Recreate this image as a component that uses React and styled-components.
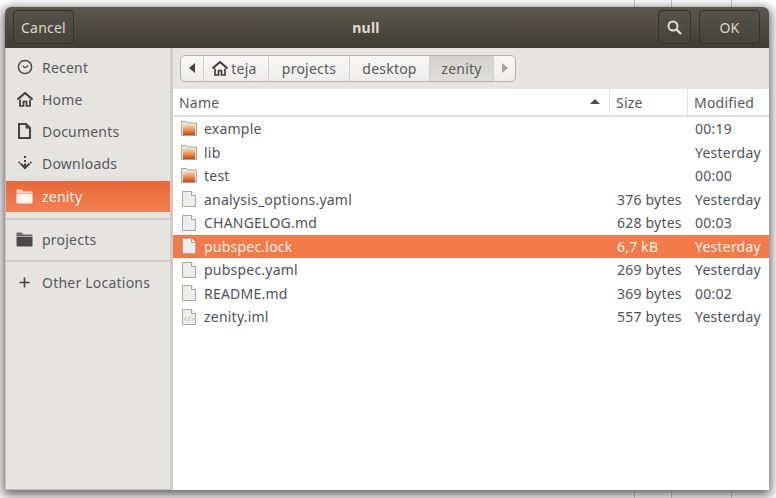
import React from 'react'
import styled, { createGlobalStyle } from 'styled-components'

const GlobalStyle = createGlobalStyle`
    html, body {
        margin: 0;
        padding: 0;
        background: #ffffff;
    }
    * {
        box-sizing: border-box;
    }
`

const Stage = styled.div`
    width: 776px;
    height: 498px;
    overflow: hidden;
    padding: 7px 7px 8px 5px;
    font-family: "Noto Sans", "Open Sans", sans-serif;
    font-size: 14px;
    letter-spacing: 0.22px;
    color: #4a4a48;
    background:
        linear-gradient(#cfcfcf, #cfcfcf) 634px 0 / 1px 100% no-repeat,
        linear-gradient(#cfcfcf, #cfcfcf) 671px 0 / 1px 100% no-repeat,
        linear-gradient(#cfcfcf, #cfcfcf) 731px 0 / 1px 100% no-repeat,
        #ffffff;
`

const Window = styled.div`
    width: 764px;
    height: 483px;
    display: flex;
    flex-direction: column;
    border-radius: 6px 6px 0 0;
    box-shadow: 0 3px 11px 2px rgba(0, 0, 0, 0.62);
    background: #ffffff;
`

const TitleBar = styled.div`
    height: 41px;
    flex: none;
    display: flex;
    align-items: center;
    padding: 0 9px 1px 8px;
    gap: 8px;
    border-radius: 6px 6px 0 0;
    background: linear-gradient(#5b574d, #3f3d35);
`

const HeaderButton = styled.div`
    width: ${(p) => p.$width}px;
    height: 34px;
    display: flex;
    align-items: center;
    justify-content: center;
    border: 1px solid #34322b;
    border-radius: 4px;
    color: #dcd8cf;
    background: linear-gradient(#55524a, #45433b);
`

const Title = styled.div`
    flex: 1;
    text-align: center;
    font-weight: 700;
    color: #e0dcd3;
`

const Body = styled.div`
    flex: 1;
    min-height: 0;
    display: flex;
`

const Sidebar = styled.div`
    width: 168px;
    flex: none;
    padding-top: 3px;
    background: #e6e4e1;
    border-left: 1px solid #c4c1bb;
    border-bottom: 1px solid #c4c1bb;
    border-right: 3px solid #cfcbc6;
`

const Place = styled.div`
    height: ${(p) => (p.$active ? 31 : 32)}px;
    margin-top: ${(p) => (p.$active ? 2 : 0)}px;
    display: flex;
    align-items: center;
    padding-left: 10px;
    gap: 9px;
    color: ${(p) => (p.$active ? '#fff6f0' : '#55595c')};
    background: ${(p) => (p.$active ? 'linear-gradient(#e8693a, #f48052)' : 'transparent')};
`

const PlaceIcon = styled.div`
    width: 17px;
    height: 17px;
    flex: none;
    display: flex;
    align-items: center;
    justify-content: center;
`

const Separator = styled.div`
    height: 2px;
    margin: ${(p) => p.$margin};
    background: #cfcdc9;
`

const Main = styled.div`
    flex: 1;
    min-width: 0;
    display: flex;
    flex-direction: column;
`

const PathArea = styled.div`
    height: 41px;
    flex: none;
    padding: 7px 0 0 7px;
    background: #e6e4e1;
`

const PathBar = styled.div`
    width: 336px;
    height: 27px;
    display: flex;
    border: 1px solid #b5b2ac;
    border-radius: 5px;
    overflow: hidden;
    background: linear-gradient(#f8f7f6, #eeedeb);
`

const Crumb = styled.div`
    width: ${(p) => p.$width}px;
    flex: none;
    display: flex;
    align-items: center;
    justify-content: center;
    gap: 3px;
    padding: 0 ${(p) => p.$shift || 0}px 1px 0;
    border-right: ${(p) => (p.$last ? 'none' : '1px solid #d3d0cb')};
    color: ${(p) => (p.$muted ? '#a09e9a' : '#57595a')};
    background: ${(p) => (p.$current ? 'linear-gradient(#d3d1cd, #e0dedb)' : 'transparent')};
`

const HeadRow = styled.div`
    height: 28px;
    flex: none;
    display: grid;
    grid-template-columns: 437px 78px 81px;
    border-bottom: 2px solid #e3e1de;
`

const HeadCell = styled.div`
    display: flex;
    align-items: center;
    justify-content: space-between;
    padding: 0 9px 0 6px;
    border-right: ${(p) => (p.$last ? 'none' : '1px solid #e3e1de')};
    color: #55595c;
`

const SortArrow = styled.div`
    width: 0;
    height: 0;
    margin-bottom: 1px;
    border-left: 5px solid transparent;
    border-right: 5px solid transparent;
    border-bottom: 5px solid #4c4c4a;
`

const Rows = styled.div`
    flex: 1;
    background: #ffffff;
`

const Row = styled.div`
    height: 23.5px;
    display: grid;
    grid-template-columns: 437px 78px 81px;
    align-items: center;
    color: ${(p) => (p.$selected ? '#fff4ee' : '#4f5358')};
    background: ${(p) => (p.$selected ? '#f27a49' : 'transparent')};
`

const NameCell = styled.div`
    display: flex;
    align-items: center;
    padding-left: 8px;
    gap: 7px;
`

const FileIconBox = styled.div`
    width: 16px;
    height: 16px;
    flex: none;
    display: flex;
    align-items: center;
    justify-content: center;
`

const SizeCell = styled.div`
    padding-left: 7px;
    white-space: nowrap;
`

const DateCell = styled.div`
    padding-left: 7px;
`

function FolderIcon({ tone }) {
    if (tone === 'light' || tone === 'dark') {
        const fill = tone === 'light' ? '#fdf6f1' : '#4a4a4a'
        return (
            <svg width="17" height="15" viewBox="0 0 17 15">
                <path d="M0.5 1.5 a1 1 0 0 1 1 -1 h4 l2 2 h8 a1 1 0 0 1 1 1 v1 h-16z" fill={fill} opacity="0.8" />
                <path d="M0.5 5 h16 v8.5 a1 1 0 0 1 -1 1 h-14 a1 1 0 0 1 -1 -1z" fill={fill} />
            </svg>
        )
    }
    return (
        <svg width="16" height="15" viewBox="0 0 16 15">
            <defs>
                <linearGradient id="folderBody" x1="0" y1="0" x2="0" y2="1">
                    <stop offset="0" stopColor="#f8d3ac" />
                    <stop offset="0.5" stopColor="#ec8f4c" />
                    <stop offset="1" stopColor="#c9430f" />
                </linearGradient>
            </defs>
            <path d="M0.5 0.5 h5 l1.5 1.5 h8.5 v12.5 h-15z" fill="#e8e6e2" stroke="#a9a6a0" />
            <rect x="2" y="4" width="12" height="10" fill="url(#folderBody)" />
        </svg>
    )
}

function FileIcon({ code }) {
    return (
        <svg width="14" height="16" viewBox="0 0 14 16">
            <path d="M0.5 0.5 h9 l4 4 v11 h-13z" fill="#efeeec" stroke="#a8a6a2" />
            <path d="M9.5 0.5 v4 h4" fill="#ffffff" stroke="#a8a6a2" />
            {code && <path d="M4.5 8 l-2 2 l2 2 M9.5 8 l2 2 l-2 2 M7.8 7.5 l-1.6 5" fill="none" stroke="#bdbbb7" />}
        </svg>
    )
}

function HomeIcon() {
    return (
        <svg width="16" height="15" viewBox="0 0 16 15">
            <path d="M0.5 7.5 L8 1 L15.5 7.5" fill="none" stroke="#3f3f3f" strokeWidth="2" />
            <path d="M3 7.5 V14 H6.5 V9.5 H9.5 V14 H13 V7.5" fill="none" stroke="#3f3f3f" strokeWidth="1.7" />
        </svg>
    )
}

function ClockIcon() {
    return (
        <svg width="16" height="16" viewBox="0 0 16 16">
            <circle cx="8" cy="8" r="6.6" fill="none" stroke="#4a4a4a" strokeWidth="1.5" />
            <path d="M8 8.8 L11.5 6.5 M8 8.8 L5.6 7" fill="none" stroke="#4a4a4a" strokeWidth="1.2" />
        </svg>
    )
}

function DocumentIcon() {
    return (
        <svg width="13" height="16" viewBox="0 0 13 16">
            <path d="M1 1 h7 l4 4 v10 h-11z" fill="none" stroke="#444444" strokeWidth="2" />
            <path d="M7.5 1 v4.5 h4.5z" fill="#444444" />
        </svg>
    )
}

function DownloadIcon() {
    return (
        <svg width="14" height="16" viewBox="0 0 14 16">
            <path d="M7 1 v2 M7 5 v2" stroke="#444444" strokeWidth="2" />
            <path d="M7 8.5 v4.5 M2.5 8.5 L7 13 L11.5 8.5" fill="none" stroke="#444444" strokeWidth="2" />
            <circle cx="1.2" cy="7.5" r="1" fill="#444444" />
            <circle cx="12.8" cy="7.5" r="1" fill="#444444" />
        </svg>
    )
}

function PlusIcon() {
    return (
        <svg width="11" height="11" viewBox="0 0 11 11">
            <path d="M5.5 0.5 v10 M0.5 5.5 h10" stroke="#444444" strokeWidth="1.6" />
        </svg>
    )
}

function SearchIcon() {
    return (
        <svg width="15" height="15" viewBox="0 0 15 15">
            <circle cx="6" cy="6" r="4.5" fill="none" stroke="#e2ded6" strokeWidth="2" />
            <path d="M9.5 9.5 L14 14" stroke="#e2ded6" strokeWidth="2.4" />
        </svg>
    )
}

function Triangle({ left, color }) {
    return (
        <svg width="6" height="10" viewBox="0 0 6 10">
            <path d={left ? 'M6 0 V10 L0 5z' : 'M0 0 V10 L6 5z'} fill={color} />
        </svg>
    )
}

const files = [
    { name: 'example', date: '00:19', folder: true },
    { name: 'lib', date: 'Yesterday', folder: true },
    { name: 'test', date: '00:00', folder: true },
    { name: 'analysis_options.yaml', size: '376 bytes', date: 'Yesterday' },
    { name: 'CHANGELOG.md', size: '628 bytes', date: '00:03' },
    { name: 'pubspec.lock', size: '6,7 kB', date: 'Yesterday', selected: true },
    { name: 'pubspec.yaml', size: '269 bytes', date: 'Yesterday' },
    { name: 'README.md', size: '369 bytes', date: '00:02' },
    { name: 'zenity.iml', size: '557 bytes', date: 'Yesterday', code: true },
]

export default function App() {
    return (
        <Stage>
            <GlobalStyle />
            <Window>
                <TitleBar>
                    <HeaderButton $width={61}>Cancel</HeaderButton>
                    <Title>null</Title>
                    <HeaderButton $width={33}><SearchIcon /></HeaderButton>
                    <HeaderButton $width={61}>OK</HeaderButton>
                </TitleBar>
                <Body>
                    <Sidebar>
                        <Place><PlaceIcon><ClockIcon /></PlaceIcon>Recent</Place>
                        <Place><PlaceIcon><HomeIcon /></PlaceIcon>Home</Place>
                        <Place><PlaceIcon><DocumentIcon /></PlaceIcon>Documents</Place>
                        <Place><PlaceIcon><DownloadIcon /></PlaceIcon>Downloads</Place>
                        <Place $active><PlaceIcon><FolderIcon tone="light" /></PlaceIcon>zenity</Place>
                        <Separator $margin="6px 0 3px" />
                        <Place><PlaceIcon><FolderIcon tone="dark" /></PlaceIcon>projects</Place>
                        <Separator $margin="5px 0 4px" />
                        <Place><PlaceIcon><PlusIcon /></PlaceIcon>Other Locations</Place>
                    </Sidebar>
                    <Main>
                        <PathArea>
                            <PathBar>
                                <Crumb $width={23}><Triangle left color="#444444" /></Crumb>
                                <Crumb $width={65} $shift={3}><HomeIcon />teja</Crumb>
                                <Crumb $width={81}>projects</Crumb>
                                <Crumb $width={80}>desktop</Crumb>
                                <Crumb $width={64} $current>zenity</Crumb>
                                <Crumb $width={21} $last $muted><Triangle color="#a5a3a0" /></Crumb>
                            </PathBar>
                        </PathArea>
                        <HeadRow>
                            <HeadCell>Name<SortArrow /></HeadCell>
                            <HeadCell>Size</HeadCell>
                            <HeadCell $last>Modified</HeadCell>
                        </HeadRow>
                        <Rows>
                            {files.map((file) => (
                                <Row key={file.name} $selected={file.selected}>
                                    <NameCell>
                                        <FileIconBox>
                                            {file.folder ? <FolderIcon /> : <FileIcon code={file.code} />}
                                        </FileIconBox>
                                        {file.name}
                                    </NameCell>
                                    <SizeCell>{file.size}</SizeCell>
                                    <DateCell>{file.date}</DateCell>
                                </Row>
                            ))}
                        </Rows>
                    </Main>
                </Body>
            </Window>
        </Stage>
    )
}
